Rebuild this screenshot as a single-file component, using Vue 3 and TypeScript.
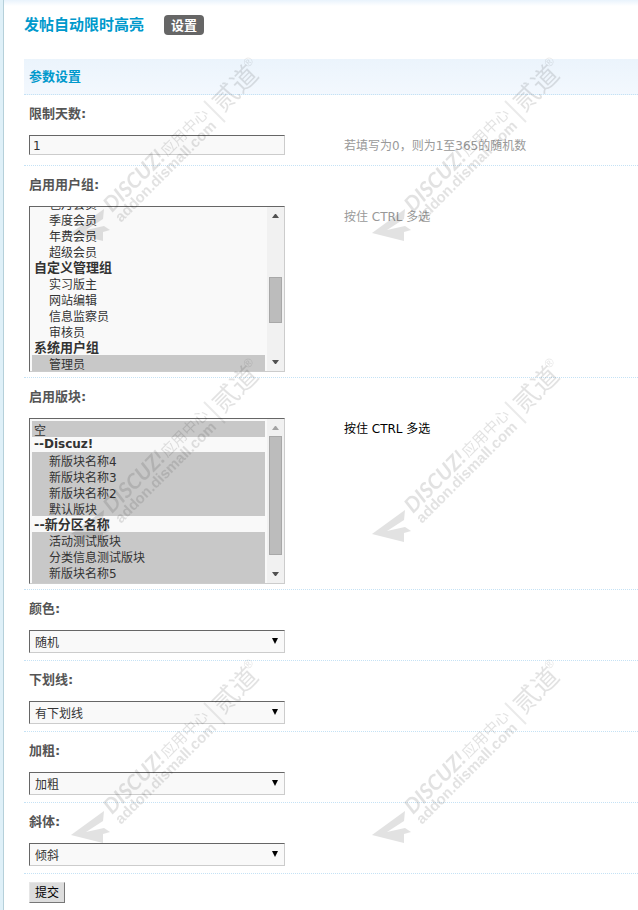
<script setup lang="ts">
import { onMounted, reactive, ref } from 'vue'

interface Item {
  name: string
  selected?: boolean
}
interface Group {
  label: string
  compact?: boolean
  items: Item[]
}
interface Choice {
  id: string
  label: string
  value: string
  options: string[]
}
interface Bar {
  top: number
  height: number
}

const TRACK = 130

const days = ref('1')
const groupList = ref<HTMLSelectElement | null>(null)
const forumList = ref<HTMLSelectElement | null>(null)
const groupBar = reactive<Bar>({ top: 0, height: 0 })
const forumBar = reactive<Bar>({ top: 0, height: 0 })

const plain = (names: string[], selected = false): Item[] => names.map((name) => ({ name, selected }))

const userGroups: Group[] = [
  {
    label: '会员用户组',
    items: plain(['限制会员', '新手上路', '注册会员', '中级会员', '高级会员', '金牌会员', '论坛元老']),
  },
  {
    label: '自定义用户组',
    items: plain(['体验会员', '周费会员', '包月会员', '季度会员', '年费会员', '超级会员']),
  },
  {
    label: '自定义管理组',
    items: plain(['实习版主', '网站编辑', '信息监察员', '审核员']),
  },
  {
    label: '系统用户组',
    items: [
      { name: '管理员', selected: true },
      ...plain(['超级版主', '版主', '禁止发言', '禁止访问', '禁止 IP', '游客', '等待验证会员']),
    ],
  },
]

const forums: Group[] = [
  {
    label: '--Discuz!',
    compact: true,
    items: plain(['新版块名称4', '新版块名称3', '新版块名称2', '默认版块'], true),
  },
  {
    label: '--新分区名称',
    items: plain(['活动测试版块', '分类信息测试版块', '新版块名称5', '新版块名称'], true),
  },
]

const choices = ref<Choice[]>([
  { id: 'color', label: '颜色:', value: '随机', options: ['随机', '红色', '蓝色'] },
  { id: 'underline', label: '下划线:', value: '有下划线', options: ['有下划线', '无下划线'] },
  { id: 'bold', label: '加粗:', value: '加粗', options: ['加粗', '不加粗'] },
  { id: 'italic', label: '斜体:', value: '倾斜', options: ['倾斜', '不倾斜'] },
])

function syncBar(list: HTMLSelectElement | null, bar: Bar) {
  if (!list) return
  bar.top = Math.round((list.scrollTop / list.scrollHeight) * TRACK)
  bar.height = Math.round((list.clientHeight / list.scrollHeight) * TRACK)
}

onMounted(() => {
  if (groupList.value) groupList.value.scrollTop = 190
  syncBar(groupList.value, groupBar)
  syncBar(forumList.value, forumBar)
})
</script>

<template>
  <main class="page">
    <header class="heading">
      <h1>发帖自动限时高亮</h1>
      <a class="tab" href="#settings">设置</a>
    </header>

    <form id="settings" @submit.prevent>
      <h2>参数设置</h2>

      <section class="row">
        <label class="name" for="days">限制天数:</label>
        <div class="cells">
          <input id="days" v-model="days" class="text" type="text" />
          <p class="hint">若填写为0，则为1至365的随机数</p>
        </div>
      </section>

      <section class="row">
        <label class="name" for="groups">启用用户组:</label>
        <div class="cells">
          <div class="listbox">
            <select id="groups" ref="groupList" class="list" multiple @scroll="syncBar(groupList, groupBar)">
              <optgroup v-for="g in userGroups" :key="g.label" :label="g.label">
                <option v-for="o in g.items" :key="o.name" :selected="o.selected">{{ o.name }}</option>
              </optgroup>
            </select>
            <div class="scrollbar" aria-hidden="true">
              <svg class="arrow" viewBox="0 0 17 17"><path d="M5 11H12L9 7H8Z" /></svg>
              <div class="track">
                <div class="thumb" :style="{ marginTop: groupBar.top + 'px', height: groupBar.height + 'px' }"></div>
              </div>
              <svg class="arrow" viewBox="0 0 17 17"><path d="M5 6H12L9 10H8Z" /></svg>
            </div>
          </div>
          <p class="hint">按住 CTRL 多选</p>
        </div>
      </section>

      <section class="row">
        <label class="name" for="forums">启用版块:</label>
        <div class="cells">
          <div class="listbox">
            <select id="forums" ref="forumList" class="list" multiple @scroll="syncBar(forumList, forumBar)">
              <option class="root" selected>空</option>
              <optgroup v-for="g in forums" :key="g.label" :label="g.label" :class="{ compact: g.compact }">
                <option v-for="o in g.items" :key="o.name" :selected="o.selected">{{ o.name }}</option>
              </optgroup>
            </select>
            <div class="scrollbar" aria-hidden="true">
              <svg class="arrow" :class="{ off: forumBar.top === 0 }" viewBox="0 0 17 17"><path d="M5 11H12L9 7H8Z" /></svg>
              <div class="track">
                <div class="thumb" :style="{ marginTop: forumBar.top + 'px', height: forumBar.height + 'px' }"></div>
              </div>
              <svg class="arrow" viewBox="0 0 17 17"><path d="M5 6H12L9 10H8Z" /></svg>
            </div>
          </div>
          <p class="hint strong">按住 CTRL 多选</p>
        </div>
      </section>

      <section v-for="c in choices" :key="c.id" class="row">
        <label class="name" :for="c.id">{{ c.label }}</label>
        <div class="cells">
          <select :id="c.id" v-model="c.value" class="drop">
            <option v-for="o in c.options" :key="o">{{ o }}</option>
          </select>
        </div>
      </section>

      <button class="submit" type="submit">提交</button>
    </form>

    <svg class="watermark" aria-hidden="true">
      <defs>
        <pattern id="mark" x="60" y="48" width="301" height="301" patternUnits="userSpaceOnUse">
          <path d="M11 185 44 161 43 171 26 182 44 178 50 182 43 184 43 193Z" />
          <text class="brand" transform="translate(52 165) rotate(-45)">DISCUZ!</text>
          <text class="site" transform="translate(61 175) rotate(-45)">addon.dismall.com</text>
          <text class="center" transform="translate(107 109) rotate(-45)">应用中心</text>
          <path class="bar" d="M144 53 165 74" />
          <text class="name-cn" transform="translate(163 65) rotate(-45)">贰道</text>
          <text class="reg" transform="translate(188 20) rotate(-45)">®</text>
        </pattern>
      </defs>
      <rect width="100%" height="100%" fill="url(#mark)" />
    </svg>
  </main>
</template>

<style>
body {
  background: #fff;
}
</style>

<style scoped>
.page {
  position: relative;
  box-sizing: border-box;
  min-height: 100vh;
  padding: 15px 0 7px 20px;
  border-left: 1px solid #b5d0da;
  margin-left: 3px;
  box-shadow: -3px 0 #dff0f8;
  background: linear-gradient(#e9f3fc, #fff) 0 0 / 100% 6px no-repeat;
  font: 12px/16px 'DejaVu Sans', 'Noto Sans CJK SC', sans-serif;
  color: #333;
}
.heading {
  display: flex;
  align-items: center;
  gap: 20px;
  height: 20px;
  margin-bottom: 24px;
}
h1 {
  margin: 0;
  font-size: 15px;
  line-height: 22px;
  color: #0099cc;
}
.tab {
  padding: 1px 7px 0;
  border-radius: 4px;
  background: #666;
  color: #fff;
  font-size: 13px;
  font-weight: bold;
  line-height: 19px;
  text-decoration: none;
}
h2 {
  margin: 0;
  padding: 1px 5px 0;
  border-bottom: 1px dotted #c5e2f5;
  background: linear-gradient(#ebf4fc, #f3f8fe);
  color: #0099cc;
  font-size: 13px;
  line-height: 34px;
}
.row {
  padding: 11px 5px 5px;
  border-bottom: 1px dotted #c5e2f5;
}
.name {
  display: block;
  margin-bottom: 13px;
  font-size: 13px;
  font-weight: bold;
  line-height: 16px;
  color: #555;
}
.cells {
  display: grid;
  grid-template-columns: 256px 1fr;
  column-gap: 59px;
  align-items: start;
  min-height: 25px;
}
.hint {
  margin: 0;
  line-height: 22px;
  color: #999;
}
.strong {
  color: #000;
}
.text,
.list,
.drop {
  display: block;
  box-sizing: border-box;
  width: 100%;
  margin: 0;
  border: 1px solid;
  border-color: #666 #ccc #ccc #666;
  border-radius: 0;
  outline: none;
  background-color: #f9f9f9;
  color: #333;
  font: inherit;
}
.text {
  height: 20px;
  padding: 1px 3px 0;
}
.drop {
  height: 23px;
  padding: 2px 20px 0 5px;
  appearance: none;
  background-image: url("data:image/svg+xml,%3Csvg xmlns='http://www.w3.org/2000/svg' width='6' height='6'%3E%3Cpath d='M0 0H6L3 6Z'/%3E%3C/svg%3E");
  background-position: right 6px top 7px;
  background-repeat: no-repeat;
}
.listbox {
  position: relative;
}
.list {
  height: 166px;
  padding: 2px 19px 2px 2px;
  overflow-y: scroll;
  scrollbar-width: none;
}
.list option {
  box-sizing: border-box;
  height: 16px;
  min-height: 16px;
  padding: 0 2px 0 17px;
  font-size: 12px;
  font-weight: normal;
  line-height: 14px;
  color: #333;
}
.list option.root {
  padding-left: 2px;
}
.list option:checked {
  background: linear-gradient(#c8c8c8, #c8c8c8);
  color: #333;
}
.list optgroup {
  display: grid;
  grid-auto-rows: 16px;
  align-items: center;
  padding: 0;
  font-size: 13px;
  font-weight: bold;
}
.list optgroup.compact {
  grid-template-rows: 15px;
  font-size: 12px;
}
.scrollbar {
  position: absolute;
  inset: 1px 1px 1px auto;
  display: flex;
  flex-direction: column;
  width: 17px;
  background: #f1f1f1;
  pointer-events: none;
}
.arrow {
  width: 17px;
  height: 17px;
  fill: #505050;
}
.arrow.off {
  fill: #a3a3a3;
}
.track {
  display: flow-root;
  flex: 1;
  padding: 0 2px;
}
.thumb {
  box-sizing: border-box;
  border: 1px solid #a8a8a8;
  background: #bcbcbc;
}
.submit {
  display: block;
  height: 21px;
  margin: 8px 5px 0;
  padding: 1px 5px 0;
  border: 1px solid;
  border-color: #e6e6e6 #777 #777 #e6e6e6;
  border-radius: 0;
  background: #ddd;
  color: #000;
  font: inherit;
}
.watermark {
  position: absolute;
  inset: 0 0 0 -4px;
  width: calc(100% + 4px);
  height: 100%;
  pointer-events: none;
  opacity: 0.11;
}
.brand {
  font: italic bold 21px Lato, sans-serif;
}
.site {
  font: bold 15px 'Liberation Sans', sans-serif;
}
.center {
  font: 15px 'Noto Sans CJK SC', sans-serif;
}
.name-cn {
  font: 26px 'Noto Sans CJK SC', sans-serif;
}
.reg {
  font: 12px 'Liberation Sans', sans-serif;
}
.bar {
  fill: none;
  stroke: #000;
  stroke-width: 2px;
  stroke-opacity: 0.7;
}
</style>
